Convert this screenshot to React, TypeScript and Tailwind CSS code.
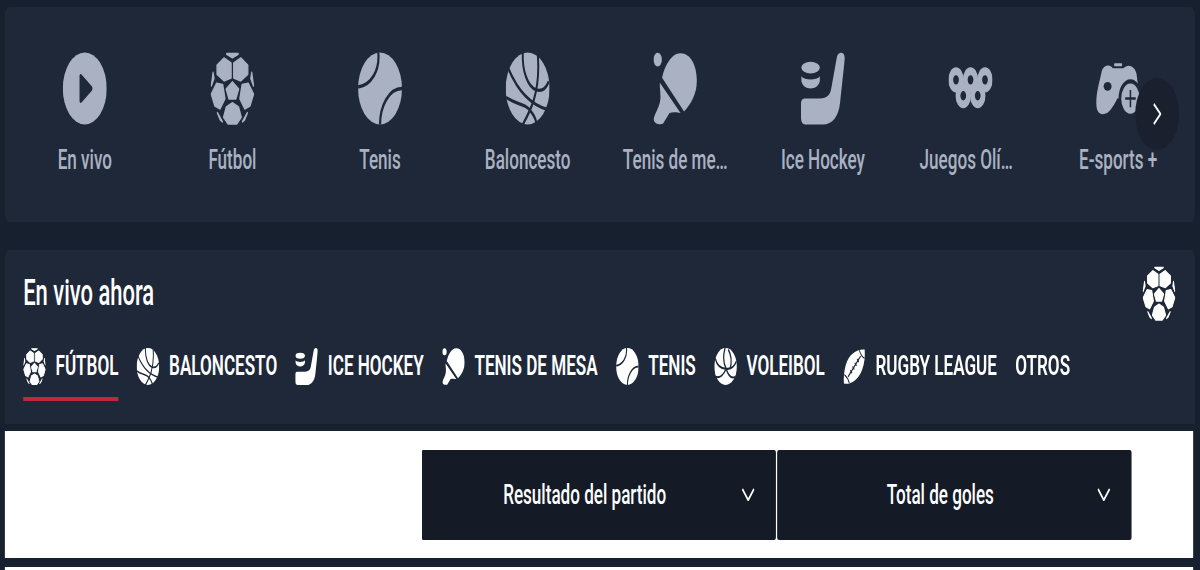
import React from "react";

const BG = "#1f2838";

type P = { className?: string; gap?: string };

function Svg({ className, children }: { className?: string; children: React.ReactNode }) {
  return (
    <svg viewBox="0 0 100 100" className={className} fill="currentColor" aria-hidden="true">
      {children}
    </svg>
  );
}

function PlayIcon({ className }: P) {
  return (
    <Svg className={className}>
      <circle cx="50" cy="50" r="50" />
      <path d="M38 33 C38 30 41 29 43 31 L66 47 C68 49 68 51 66 53 L43 69 C41 71 38 70 38 67 Z" fill="#1f2838" />
    </Svg>
  );
}

function FootballIcon({ className }: P) {
  const polys = [
    "50,41 64,51 58,64 42,64 36,51",
    "37,2 63,2 50,7",
    "15,18 31,8 47,15 47,35 31,39 15,30",
    "85,18 69,8 53,15 53,35 69,39 85,30",
    "14,43 28,45 33,64 22,78 10,74 2,58",
    "86,43 72,45 67,64 78,78 90,74 98,58",
    "50,70 64,76 70,90 60,99 40,99 30,90 36,76",
    "2,46 6,28 8,36",
    "98,46 94,28 92,36",
    "16,84 27,96 22,93",
    "84,84 73,96 78,93",
  ];
  return (
    <Svg className={className}>
      <g stroke="currentColor" strokeWidth="3" strokeLinejoin="round">
        {polys.map((p) => (
          <polygon key={p} points={p} />
        ))}
      </g>
    </Svg>
  );
}

function TennisIcon({ className, gap = BG }: P) {
  return (
    <Svg className={className}>
      <circle cx="50" cy="50" r="50" />
      <g fill="none" stroke={gap} strokeWidth="5">
        <path d="M46 0 C50 25 30 45 0 48" />
        <path d="M100 50 C70 50 50 75 50 100" />
      </g>
    </Svg>
  );
}

function BasketIcon({ className, gap = BG }: P) {
  return (
    <Svg className={className}>
      <circle cx="50" cy="50" r="50" />
      <g fill="none" stroke={gap} strokeWidth="4.5">
        <path d="M39 0 C37 25 50 48 70 52 C82 54 92 50 98 40" />
        <path d="M73 3 C76 25 74 45 64 66 C58 78 48 90 39 100" />
        <path d="M6 22 C25 50 55 72 95 79" />
        <path d="M1 62 C20 72 40 70 52 78 C62 85 68 90 70 98" />
      </g>
    </Svg>
  );
}

function PingIcon({ className }: P) {
  return (
    <Svg className={className}>
      <ellipse cx="10" cy="10" rx="9.5" ry="9.5" />
      <path d="M20 35 C25 20 40 1 62 1 C85 1 99 18 99 40 C99 58 85 72 70 82 Z" />
      <path d="M15 42 L62 84 C55 83 45 82 37 84 L22 99 C12 101 0 98 1 92 C3 85 15 75 16 65 C17 55 14 48 15 42 Z" />
    </Svg>
  );
}

function HockeyIcon({ className }: P) {
  return (
    <Svg className={className}>
      <ellipse cx="22" cy="21" rx="21" ry="8" />
      <path d="M1 33 C8 39 36 39 43 33 L43 40 C40 47 32 50 22 50 C12 50 4 47 1 40 Z" />
      <path d="M82 6 C85 -2 100 -2 100 8 L89 70 C86 88 72 100 50 100 L10 100 C2 100 0 95 0 88 L0 72 C0 67 3 64 8 64 L37 64 C54 64 66 62 69 50 Z" />
    </Svg>
  );
}

function RingsIcon({ className }: P) {
  return (
    <Svg className={className}>
      <g fill="none" stroke="currentColor" strokeWidth="11">
        <circle cx="17" cy="38" r="12" />
        <circle cx="50" cy="38" r="12" />
        <circle cx="83" cy="38" r="12" />
        <circle cx="33.5" cy="60" r="12" />
        <circle cx="66.5" cy="60" r="12" />
      </g>
    </Svg>
  );
}

function PadIcon({ className }: P) {
  return (
    <Svg className={className}>
      <path d="M12 28 C15 18 30 15 38 22 L62 22 C72 15 88 18 92 30 L98 60 L48 64 C42 72 32 82 25 84 C12 88 0 85 0 70 C0 55 8 40 12 28 Z" />
      <rect x="41" y="15" width="18" height="4" rx="1" />
      <ellipse cx="26" cy="47" rx="9" ry="6" fill="#1f2838" />
      <circle cx="78" cy="64" r="24" stroke="#1f2838" strokeWidth="6" />
      <path d="M78 52 V76 M66 64 H90" stroke="#1f2838" strokeWidth="3.5" fill="none" />
    </Svg>
  );
}

function VolleyIcon({ className, gap = BG }: P) {
  return (
    <Svg className={className}>
      <circle cx="50" cy="50" r="50" />
      <g fill="none" stroke={gap} strokeWidth="5.5">
        <path d="M48 0 C38 20 40 40 52 56" />
        <path d="M52 56 C30 56 12 48 4 28" />
        <path d="M52 56 C42 72 25 82 6 78" />
        <path d="M52 56 C72 58 88 52 98 36" />
        <path d="M62 4 C76 20 78 38 70 56" />
        <path d="M52 56 C62 74 76 84 92 78" />
      </g>
    </Svg>
  );
}

function RugbyIcon({ className, gap = BG }: P) {
  return (
    <Svg className={className}>
      <path d="M96 4 C62 2 26 16 12 46 C4 64 2 82 4 96 C30 100 66 88 84 60 C96 42 98 22 96 4 Z" />
      <g fill="none" stroke={gap} strokeWidth="4">
        <path d="M22 78 L78 22" />
        <path d="M32 60 L40 68 M42 50 L50 58 M52 40 L60 48 M62 30 L70 38" />
        <path d="M72 6 C76 14 86 24 95 28" />
        <path d="M6 72 C14 76 24 86 28 95" />
      </g>
    </Svg>
  );
}

const sports = [
  { label: "En vivo", Icon: PlayIcon, nudge: "" },
  { label: "Fútbol", Icon: FootballIcon, nudge: "" },
  { label: "Tenis", Icon: TennisIcon, nudge: "" },
  { label: "Baloncesto", Icon: BasketIcon, nudge: "" },
  { label: "Tenis de me…", Icon: PingIcon, nudge: "" },
  { label: "Ice Hockey", Icon: HockeyIcon, nudge: "" },
  { label: "Juegos Olí…", Icon: RingsIcon, nudge: "mr-[14px]" },
  { label: "E-sports +", Icon: PadIcon, nudge: "" },
];

const tabs = [
  { label: "Fútbol", Icon: FootballIcon },
  { label: "Baloncesto", Icon: BasketIcon },
  { label: "Ice Hockey", Icon: HockeyIcon },
  { label: "Tenis de mesa", Icon: PingIcon },
  { label: "Tenis", Icon: TennisIcon },
  { label: "Voleibol", Icon: VolleyIcon },
  { label: "Rugby League", Icon: RugbyIcon },
  { label: "Otros", Icon: null },
];

function Selector({ label }: { label: string }) {
  return (
    <div className="relative flex h-[90px] w-[581px] items-center justify-center rounded-[3px] bg-[#141a26] pr-[46px] text-[28px] font-medium text-white">
      <span>{label}</span>
      <svg viewBox="0 0 21 13" className="absolute right-[35px] top-[38px] h-[13px] w-[21px]" fill="none" stroke="currentColor" strokeWidth="2.6" aria-hidden="true">
        <path d="M1 1 L10.5 12 L20 1" />
      </svg>
    </div>
  );
}

export default function App() {
  return (
    <div className="h-[570px] w-[1200px] overflow-hidden bg-[#17202e]">
      <div
        className="h-[570px] w-[1967px] origin-top-left scale-x-[0.61] pl-[8px] pt-[7px]"
        style={{ fontFamily: "Roboto, 'Liberation Sans', sans-serif" }}
      >
        <section className="relative flex h-[215px] w-[1951px] items-start overflow-hidden rounded-[8px] bg-[#1f2838] pl-[10px] pt-[45px]">
          {sports.map(({ label, Icon, nudge }) => (
            <div key={label} className="flex w-[242px] shrink-0 flex-col items-center text-[#a9b1c2]">
              <Icon className="h-[73px] w-[72px]" />
              <div className={`mt-[17px] whitespace-nowrap text-center text-[28px] font-medium leading-[36px] ${nudge}`}>{label}</div>
            </div>
          ))}
          <button className="absolute left-[1853px] top-[71px] flex h-[72px] w-[72px] items-center justify-center rounded-full bg-[#1a202d] text-white">
            <svg viewBox="0 0 14 22" className="h-[22px] w-[14px]" fill="none" stroke="currentColor" strokeWidth="2.4" aria-hidden="true">
              <path d="M1.5 1 L12.5 11 L1.5 21" />
            </svg>
          </button>
        </section>

        <section className="mt-[28px] h-[174px] w-[1951px] rounded-t-[8px] bg-[#1f2838] pl-[30px] pr-[30px]">
          <div className="flex items-center justify-between pt-[15px]">
            <h2 className="text-[36px] font-medium leading-[56px] text-white">En vivo ahora</h2>
            <FootballIcon className="mr-[2px] mt-[1px] h-[55px] w-[54px] text-white" />
          </div>
          <div className="mt-[15px] flex items-start gap-[30px]">
            {tabs.map(({ label, Icon }, i) => (
              <div key={label} className={i === 0 ? "flex h-[65px] items-start gap-[16px] border-b-[4px] border-[#c0283c] pt-[12px]" : "flex h-[65px] items-start gap-[16px] pt-[12px]"}>
                {Icon && <Icon className="h-[37px] w-[37px] text-white" />}
                <span className="whitespace-nowrap text-[28px] font-semibold uppercase leading-[36px] text-white">{label}</span>
              </div>
            ))}
          </div>
        </section>

        <section className="mt-[7px] flex h-[127px] w-[1948px] items-center justify-end bg-white pr-[101px]">
          <div className="flex gap-[2px]">
            <Selector label="Resultado del partido" />
            <Selector label="Total de goles" />
          </div>
        </section>

        <div className="mt-[9px] h-[10px] w-[1948px] bg-white" />
      </div>
    </div>
  );
}
